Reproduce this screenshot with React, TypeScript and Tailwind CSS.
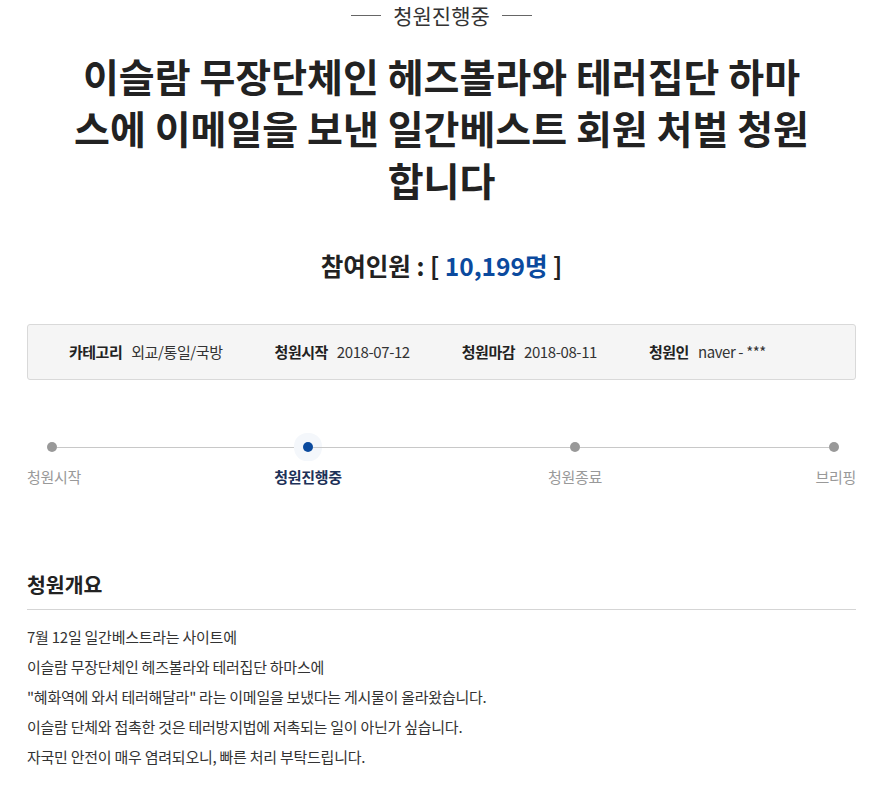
import React from 'react';

const font = { fontFamily: '"Noto Sans CJK KR", "Noto Sans", sans-serif' };

const App: React.FC = () => {
  const info = [
    { label: '카테고리', value: '외교/통일/국방' },
    { label: '청원시작', value: '2018-07-12' },
    { label: '청원마감', value: '2018-08-11' },
    { label: '청원인', value: 'naver - ***' },
  ];

  const body = [
    '7월 12일 일간베스트라는 사이트에',
    '이슬람 무장단체인 헤즈볼라와 테러집단 하마스에',
    '"혜화역에 와서 테러해달라" 라는 이메일을 보냈다는 게시물이 올라왔습니다.',
    '이슬람 단체와 접촉한 것은 테러방지법에 저촉되는 일이 아닌가 싶습니다.',
    '자국민 안전이 매우 염려되오니, 빠른 처리 부탁드립니다.',
  ];

  return (
    <div className="min-h-[794px] bg-white pl-[27px] pr-[24px] text-[#333]" style={font}>
      {/* status label */}
      <div className="flex items-center justify-center gap-[12px] h-[30px]">
        <span className="w-[30px] h-px bg-[#666]" />
        <span className="text-[21px] leading-[30px] text-[#333]">청원진행중</span>
        <span className="w-[30px] h-px bg-[#666]" />
      </div>

      {/* title */}
      <h1 className="mt-[19px] text-center text-[39px] leading-[52px] font-bold text-[#222]">
        <span className="block">이슬람 무장단체인 헤즈볼라와 테러집단 하마</span>
        <span className="block">스에 이메일을 보낸 일간베스트 회원 처벌 청원</span>
        <span className="block">합니다</span>
      </h1>

      {/* participants */}
      <div className="mt-[44px] text-center text-[24.5px] leading-[34px] font-bold text-[#222]">
        참여인원 : [ <span className="text-[#0b4a9e]">10,199명</span> ]
      </div>

      {/* info box */}
      <div className="mt-[41px] h-[56px] flex items-center gap-[52px] pl-[41px] bg-[#f5f5f5] border border-[#d9d9d9] rounded-[3px] text-[15px]">
        {info.map((item, i) => (
          <div key={i} className="flex items-center gap-[9px]">
            <span className="font-bold text-[#222] tracking-[-0.5px]">{item.label}</span>
            <span className="text-[#333] tracking-[-0.4px]">{item.value}</span>
          </div>
        ))}
      </div>

      {/* progress */}
      <div className="mt-[62px] flex items-center h-[10px] pl-[20px]">
        <span className="w-[10px] h-[10px] rounded-full bg-[#999]" />
        <span className="w-[246px] h-px bg-[#c8c8c8]" />
        <span className="w-[10px] h-[10px] rounded-full bg-[#0b4a9e] ring-[9px] ring-[#f4f7fb]" />
        <span className="w-[257px] h-px bg-[#c8c8c8]" />
        <span className="w-[10px] h-[10px] rounded-full bg-[#999]" />
        <span className="w-[249px] h-px bg-[#c8c8c8]" />
        <span className="w-[10px] h-[10px] rounded-full bg-[#999]" />
      </div>
      <div className="mt-[14px] flex text-[15px] leading-[22px] tracking-[-0.3px]">
        <span className="w-[100px] text-[#999]">청원시작</span>
        <span className="ml-[131px] w-[100px] text-center font-bold text-[#1d3158]">청원진행중</span>
        <span className="ml-[167px] w-[100px] text-center text-[#999]">청원종료</span>
        <span className="flex-1 text-right text-[#999]">브리핑</span>
      </div>

      {/* overview */}
      <h2 className="mt-[82px] pb-[11px] border-b border-[#d5d5d5] text-[20.5px] leading-[28px] font-bold text-[#222]">
        청원개요
      </h2>
      <div className="mt-[12px] text-[15px] leading-[30px] text-[#333] tracking-[-0.25px]">
        {body.map((line, i) => (
          <p key={i}>{line}</p>
        ))}
      </div>
    </div>
  );
};

export default App;
